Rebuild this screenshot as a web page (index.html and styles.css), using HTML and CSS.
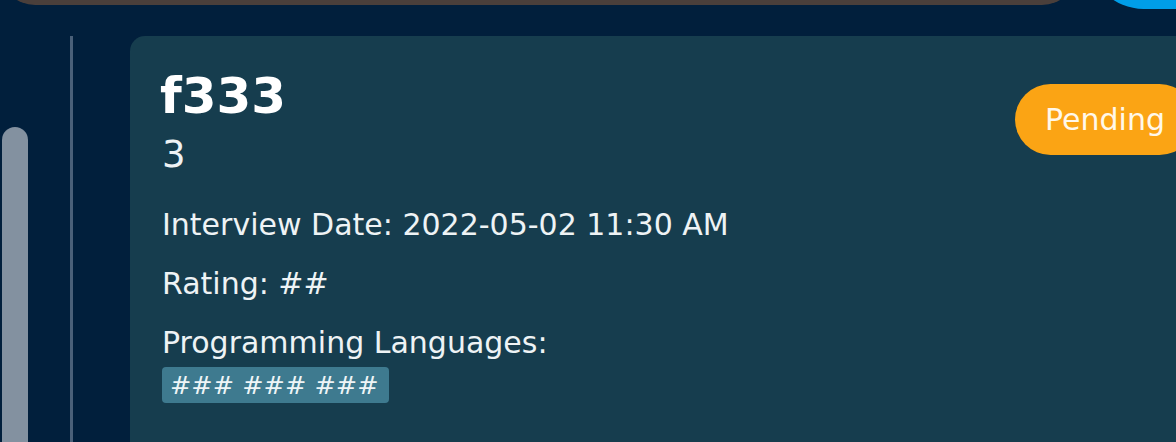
FILE: index.html
```html
<!DOCTYPE html>
<html lang="en">
<head>
<meta charset="utf-8">
<title>Interviews</title>
<link rel="stylesheet" href="styles.css">
</head>
<body>
<div class="page">
  <header class="topbar">
    <div class="search"></div>
    <div class="add-btn"></div>
  </header>
  <div class="main">
    <aside class="side">
      <div class="thumb"></div>
    </aside>
    <section class="content">
      <article class="card">
        <div class="card-head">
          <div class="titles">
            <h2 class="title">f333</h2>
            <div class="subtitle">3</div>
          </div>
          <span class="badge">Pending</span>
        </div>
        <p class="line">Interview Date: 2022-05-02 11:30 AM</p>
        <p class="line">Rating: ##</p>
        <p class="line last">Programming Languages:</p>
        <div class="tags"><span class="tag">### ### ###</span></div>
      </article>
    </section>
  </div>
</div>
</body>
</html>
```
FILE: styles.css
```css
html, body {
  margin: 0;
  padding: 0;
  width: 1176px;
  height: 442px;
  overflow: hidden;
  background: #011f3c;
  font-family: "DejaVu Sans", Verdana, sans-serif;
  color: #f2f5f6;
}

.page {
  width: 1300px;
}

.topbar {
  display: flex;
  align-items: flex-start;
  gap: 12px;
  height: 109px;
  margin-top: -100px;
}

.search {
  width: 1077px;
  height: 70px;
  margin-top: 35px;
  border-radius: 35px;
  background: #4a3f3b;
}

.add-btn {
  width: 180px;
  height: 109px;
  border-radius: 55px;
  background: #009ee8;
}

.main {
  display: flex;
  margin-top: 27px;
  height: 500px;
}

.side {
  width: 70px;
  padding-left: 2px;
  box-sizing: border-box;
}

.thumb {
  width: 26px;
  height: 400px;
  margin-top: 91px;
  border-radius: 13px 13px 0 0;
  background: #8391a0;
}

.content {
  border-left: 3px solid #4a6079;
  padding-left: 57px;
}

.card {
  width: 1095px;
  height: 500px;
  box-sizing: border-box;
  background: #163d4e;
  border-radius: 15px 15px 0 0;
  padding: 31px 30px 0 32px;
}

.card-head {
  display: flex;
  justify-content: space-between;
  align-items: flex-start;
}

.title {
  margin: 0 0 0 -2px;
  font-size: 50px;
  line-height: 58px;
  font-weight: bold;
  color: #ffffff;
}

.subtitle {
  margin-top: 7px;
  font-size: 37px;
  line-height: 45px;
  color: #eef2f4;
}

.badge {
  margin-top: 17px;
  background: #fba414;
  color: #fff8ea;
  font-size: 30px;
  line-height: 35px;
  padding: 18px 30px;
  border-radius: 36px;
}

.line {
  margin: 0 0 24px 0;
  font-size: 30px;
  line-height: 35px;
  color: #eef3f5;
}

.card-head + .line {
  margin-top: 30px;
}

.line.last {
  margin-bottom: 7px;
}

.tags {
  display: flex;
}

.tag {
  background: #3e7a8f;
  color: #eef5f7;
  font-size: 25.5px;
  line-height: 36px;
  padding: 0 10px 0 8px;
  border-radius: 4px;
}
```
